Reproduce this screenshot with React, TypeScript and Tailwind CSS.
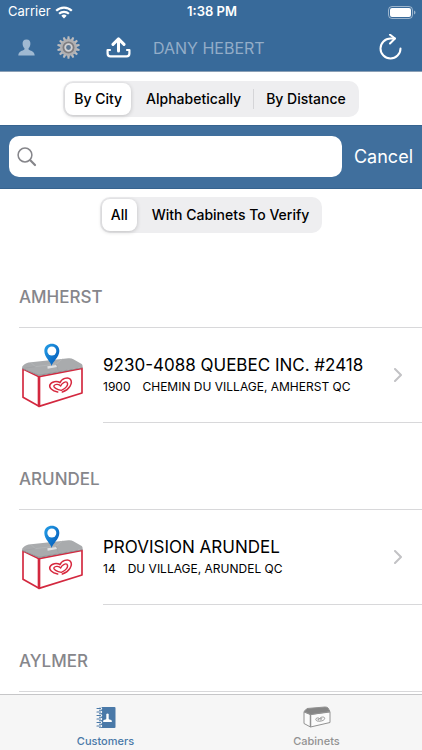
import { useState } from "react";

type Customer = {
  city: string;
  name: string;
  number: string;
  address: string;
};

const customers: Customer[] = [
  { city: "AMHERST", name: "9230-4088 QUEBEC INC. #2418", number: "1900", address: "CHEMIN DU VILLAGE, AMHERST QC" },
  { city: "ARUNDEL", name: "PROVISION ARUNDEL", number: "14", address: "DU VILLAGE, ARUNDEL QC" },
  { city: "AYLMER", name: "", number: "", address: "" },
];

export default function App() {
  const [query, setQuery] = useState("");
  const [sort, setSort] = useState("By City");
  const [filter, setFilter] = useState("All");

  const visible = customers.filter((customer) => `${customer.city} ${customer.name}`.toLowerCase().includes(query.toLowerCase()));

  return (
    <div className="flex h-screen flex-col overflow-hidden bg-white font-['Inter',sans-serif] text-black">
      <header className="border-b border-[#8a9fb5] bg-[#386a9a] text-white">
        <StatusBar />
        <NavBar />
      </header>

      <div className="flex justify-center pt-[9px] pb-2">
        <Segmented options={["By City", "Alphabetically", "By Distance"]} value={sort} onChange={setSort} />
      </div>

      <div className="flex items-center gap-3 border-y border-[#36638f] bg-[#406f9d] px-[9px] pt-[10px] pb-[11px]">
        <label className="flex h-[41px] flex-1 items-center rounded-[10px] bg-white pl-2">
          <SearchIcon />
          <input
            type="search"
            aria-label="Search customers"
            value={query}
            onChange={(event) => setQuery(event.target.value)}
            className="h-full min-w-0 flex-1 bg-transparent px-2 text-lg outline-none"
          />
        </label>
        <button type="button" onClick={() => setQuery("")} className="text-lg text-white">Cancel</button>
      </div>

      <div className="flex justify-center pt-2">
        <Segmented options={["All", "With Cabinets To Verify"]} value={filter} onChange={setFilter} />
      </div>

      <main className="min-h-0 flex-1 overflow-hidden pt-2">
        {visible.map((customer) => (
          <section key={customer.city}>
            <h2 className="ml-[19px] flex h-[87px] items-end border-b border-[#d8d8da] pb-[18px] text-[17px] leading-6 font-medium text-[#86868b]">
              {customer.city}
            </h2>
            {customer.name && <CustomerRow customer={customer} />}
          </section>
        ))}
      </main>

      <nav className="grid h-14 shrink-0 grid-cols-2 border-t border-[#c6c6c8] bg-[#f6f6f6] text-[11px] leading-4 font-medium">
        <a href="#customers" className="flex flex-col items-center pt-[6px] text-[#4a79a8]">
          <span className="flex h-8 items-center"><AddressBookIcon /></span>
          <span>Customers</span>
        </a>
        <a href="#cabinets" className="flex flex-col items-center pt-[6px] text-[#929292]">
          <span className="flex h-8 items-center"><CabinetIcon /></span>
          <span>Cabinets</span>
        </a>
      </nav>
    </div>
  );
}

function StatusBar() {
  return (
    <div className="grid h-6 grid-cols-3 items-center pr-[6px] pl-2 text-[13px]">
      <div className="flex items-center gap-1">
        Carrier
        <svg width="18" height="13" viewBox="0 0 18 13" fill="none" stroke="currentColor" strokeWidth="2.2">
          <path d="M1.2 4.8a11 11 0 0 1 15.6 0" />
          <path d="M4.1 7.8a7 7 0 0 1 9.8 0" />
          <path d="M6.3 9.8a4 4 0 0 1 5.4 0L9 12.5z" fill="currentColor" stroke="none" />
        </svg>
      </div>
      <div className="text-center font-semibold">1:38 PM</div>
      <svg className="justify-self-end" width="28" height="13" viewBox="0 0 28 13">
        <rect x="0.5" y="0.5" width="24" height="12" rx="3.5" fill="none" stroke="#fff" strokeOpacity="0.5" />
        <rect x="2" y="2" width="21" height="9" rx="2" fill="#fff" />
        <path d="M26 4.5v4c2-.8 2-3.2 0-4z" fill="#fff" fillOpacity="0.5" />
      </svg>
    </div>
  );
}

function NavBar() {
  return (
    <div className="flex h-[47px] items-center pr-5 pl-[18px]">
      <button type="button" aria-label="Profile">
        <svg width="17" height="17" viewBox="0 0 17 17" fill="#9fb9d2">
          <path d="M8.5.5c2.9 0 4.1 1.9 3.9 4.4-.2 2.2-.9 3.3-1.7 4.2-.3.5-.3 1.3.1 1.7 1.300 1 5.700 1.300 5.900 5.700H.3c.2-4.400 4.600-4.700 5.900-5.700.4-.4.4-1.200.1-1.700-.8-.9-1.500-2-1.700-4.200C4.400 2.400 5.600.5 8.500.5z" />
        </svg>
      </button>
      <button type="button" aria-label="Settings" className="ml-[22px]"><GearIcon /></button>
      <button type="button" aria-label="Upload" className="ml-[26px]">
        <svg width="25" height="21" viewBox="0 0 25 21" fill="none" stroke="#fff" strokeLinecap="round" strokeLinejoin="round">
          <path d="M12.5 14V2.5M7 7.400l5.500-5.500L18 7.400" strokeWidth="3" />
          <path d="M4 13H1.600v3.500c0 2 .9 2.800 2.800 2.800h16.200c1.900 0 2.800-.8 2.800-2.800V13H21" strokeWidth="2.2" />
        </svg>
      </button>
      <h1 className="ml-[22px] flex-1 text-base whitespace-nowrap text-[#93adc8]">DANY HEBERT</h1>
      <button type="button" aria-label="Refresh">
        <svg width="23" height="28" viewBox="0 3 23 28" fill="none" stroke="#fff" strokeWidth="2" strokeLinecap="round" strokeLinejoin="round">
          <path d="M21.5 17.500a10 10 0 1 1-10-10h4.300" />
          <path d="M11 3.700l5 3.800-5 5" />
        </svg>
      </button>
    </div>
  );
}

function GearIcon() {
  const teeth = Array.from({ length: 14 }, (_, index) => (index * 360) / 14);
  return (
    <svg width="23" height="23" viewBox="0 0 23 23">
      <g fill="#bcbcbe">
        {teeth.map((angle) => (
          <path key={angle} d="M10 4.5L10.6.2h1.800l.6 4.300z" transform={`rotate(${angle} 11.5 11.5)`} />
        ))}
      </g>
      <circle cx="11.5" cy="11.5" r="7.2" fill="#7e7d80" stroke="#b0b0b2" strokeWidth="2.4" />
      <circle cx="11.5" cy="11.5" r="3.3" fill="#5d7792" stroke="#d2d2d4" strokeWidth="1.8" />
    </svg>
  );
}

function SearchIcon() {
  return (
    <svg width="20" height="20" viewBox="0 0 20 20" fill="none" stroke="#85858a" strokeLinecap="round">
      <circle cx="8" cy="8" r="6.9" strokeWidth="1.5" />
      <path d="M13.3 13.3l4.7 4.7" strokeWidth="2.2" />
    </svg>
  );
}

type SegmentedProps = {
  options: string[];
  value: string;
  onChange: (option: string) => void;
};

function Segmented({ options, value, onChange }: SegmentedProps) {
  const selected = options.indexOf(value);
  return (
    <div className="flex h-9 items-center rounded-[10px] bg-[#eeeef0] p-[2px] text-sm font-medium">
      {options.map((option, index) => (
        <div key={option} className="flex h-full items-center">
          {index > 0 && <span className={index - 1 === selected || index === selected ? "w-1" : "mx-px h-5 w-px bg-[#d5d5d8]"} />}
          <button
            type="button"
            aria-pressed={option === value}
            onClick={() => onChange(option)}
            className={option === value ? "h-full rounded-lg bg-white px-[9px] shadow-[0_1px_4px_rgba(0,0,0,0.2)]" : "h-full px-[11px]"}
          >
            {option}
          </button>
        </div>
      ))}
    </div>
  );
}

function CustomerRow({ customer }: { customer: Customer }) {
  return (
    <a href="#customer" className="flex h-[95px] items-center pl-[19px]">
      <FreezerPicture />
      <div className="ml-[17px] flex h-full min-w-0 flex-1 items-center border-b border-[#d8d8da] pr-5">
        <div className="min-w-0 flex-1 whitespace-nowrap">
          <div className="text-[17px] leading-6">{customer.name}</div>
          <div className="flex gap-3 text-xs leading-5">
            <span>{customer.number}</span>
            <span>{customer.address}</span>
          </div>
        </div>
        <svg width="8" height="14" viewBox="0 0 8 14" fill="none" stroke="#c2c2c5" strokeWidth="2" strokeLinecap="round" strokeLinejoin="round">
          <path d="M1 1l6 6-6 6" />
        </svg>
      </div>
    </a>
  );
}

function FreezerPicture() {
  return (
    <svg className="shrink-0" width="67" height="67" viewBox="12 12 201 201" strokeLinejoin="round">
      <defs>
        <linearGradient id="pin" x1="0" x2="1" y1="0" y2="1">
          <stop offset="0" stopColor="#25a0e8" />
          <stop offset="1" stopColor="#0054b5" />
        </linearGradient>
      </defs>
      <path d="M24 93l48 23v89l-48-27z" fill="#fff" stroke="#d3283f" strokeWidth="5" />
      <path d="M72 116l129-25v74L72 205z" fill="#fff" stroke="#d3283f" strokeWidth="5" />
      <path d="M72 115v90" stroke="#d3283f" strokeWidth="8" />
      <path d="M21 89q1-8 15-14 4-2 12-2l112-12q9-1 15 3l25 14q3 2 3 9L72 112z" fill="#a9abad" />
      <path d="M21 89L72 110l131-23v3L72 114 21 92z" fill="#909396" />
      <path d="M48 74l13 12 63-8 18-15" fill="none" stroke="#b7b9bb" strokeWidth="2" />
      <path d="M61 86L26 91M124 78l6 20" stroke="#9a9da0" strokeWidth="1.5" />
      <path d="M97 85l26-4 3 6-28 5z" fill="#dfe0e1" />
      <path d="M110 84c-2-12-22-26-22-45 0-29 45-29 45 0 0 19-21 33-23 45z" fill="url(#pin)" />
      <circle cx="110.5" cy="39" r="13.5" fill="#fff" />
      <g fill="none" stroke="#d7283e" strokeLinecap="round">
        <path d="M128 162C111 158 101 149 105 140c4-10 21-12 30-6 4-12 24-19 31-10 9 12-4 32-24 38" strokeWidth="4.5" />
        <path d="M139 157C126 155 114 148 117 143c4-6 16-4 20 1 3-9 15-15 19-11 6 7-4 19-17 24z" strokeWidth="4" />
      </g>
    </svg>
  );
}

function AddressBookIcon() {
  return (
    <svg width="20" height="23" viewBox="0 0 20 23">
      <path d="M3 1h15.5q1 0 1 1v19q0 1-1 1H3z" fill="currentColor" />
      {[2.5, 6, 9.5, 13, 16.5, 20].map((y) => (
        <g key={y}>
          <path d={`M1 ${y}h4`} stroke="#f6f6f6" strokeWidth="2.4" strokeLinecap="round" />
          <path d={`M1 ${y}h3.5`} stroke="currentColor" strokeWidth="1.1" strokeLinecap="round" />
        </g>
      ))}
      <path d="M10.3 8q1.200-1.200 2.400 0v4.600q0 .8.8 1l1.800.5q.6.300.6 1.900H7.100q0-1.600.6-1.900l1.800-.5q.8-.2.8-1z" fill="#fff" />
    </svg>
  );
}

function CabinetIcon() {
  return (
    <svg width="28" height="22" viewBox="0 0 28 22" fill="none" stroke="currentColor" strokeLinejoin="round">
      <path d="M1 6l6.500 2.500V21L1 17.500zM7.500 8.500L27 6v10.500L7.500 21z" fill="#fbfbfb" />
      <path d="M7.5 8v13" strokeWidth="1.5" />
      <path d="M1 5.500L4 2.500 22 1q2 0 3 1l2 3.500L7.500 8.500z" fill="#858585" />
      <path d="M15.500 15.200c-3 .1-3.500-2.700-1.500-3.200 1.200-.3 2 .1 2.500.8.800-1.400 2.400-2 4-1.700 2.400.5 1 3.200-1.500 3.700-1.300.4-2.500.5-3.500.4zM16 14c-1.500 0-1.700-1 0-.8 1-.9 2.500-1.200 2.800-.6.2.7-.8 1.200-1.800 1.400" strokeWidth="0.9" />
    </svg>
  );
}
